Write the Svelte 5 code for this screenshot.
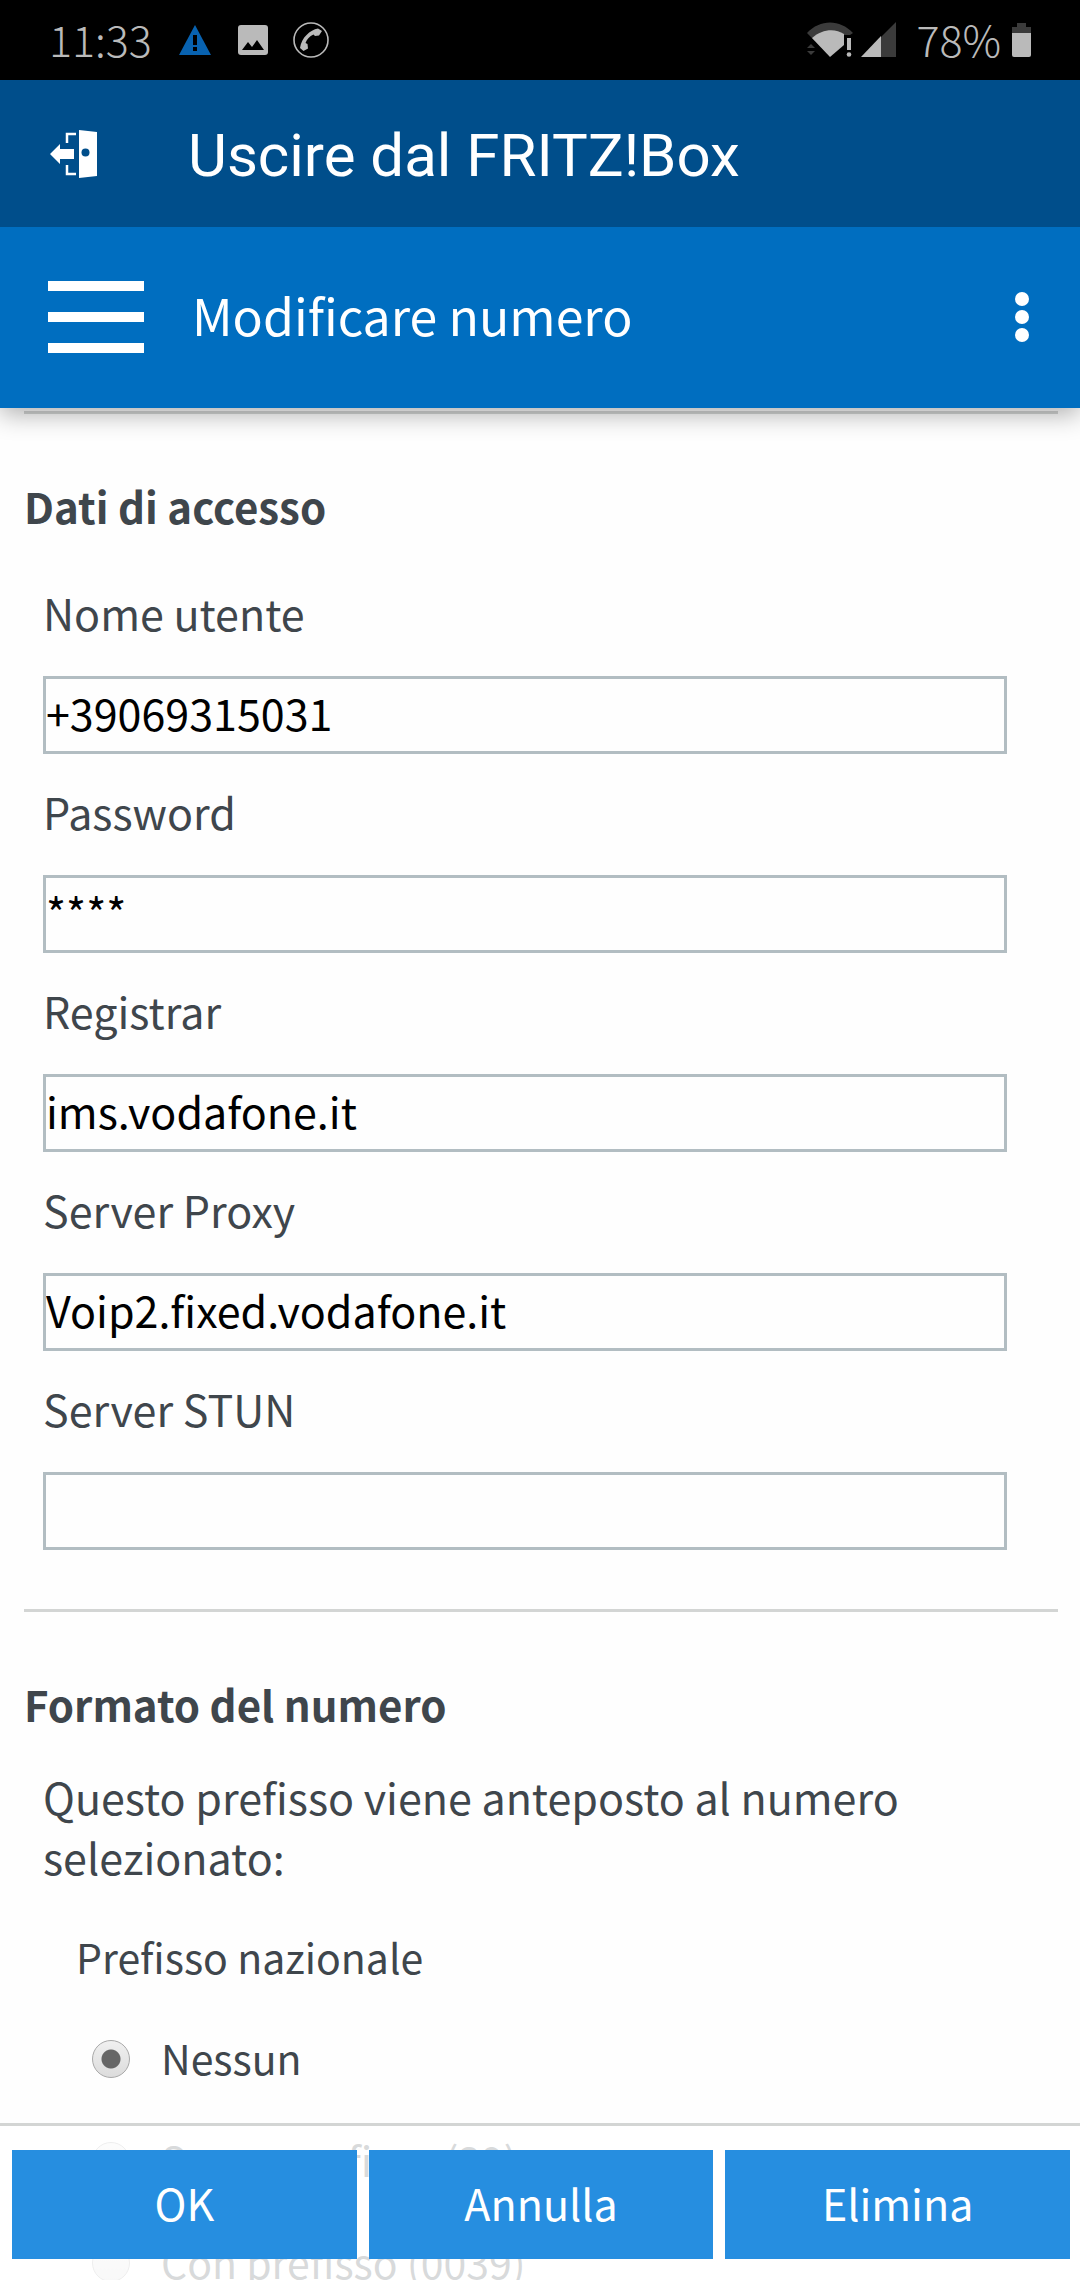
<script lang="ts">
  const fields = [
    { id: 'username', label: 'Nome utente', value: '+39069315031' },
    { id: 'password', label: 'Password', value: '****' },
    { id: 'registrar', label: 'Registrar', value: 'ims.vodafone.it' },
    { id: 'proxy', label: 'Server Proxy', value: 'Voip2.fixed.vodafone.it' },
    { id: 'stun', label: 'Server STUN', value: '' }
  ];

  const prefixes = ['Nessun', 'Senza prefisso (39)', 'Con prefisso (0039)'];
  const actions = ['OK', 'Annulla', 'Elimina'];

  let prefix = $state('Nessun');
</script>

<div class="screen">
  <header class="top">
    <div class="status">
      <span class="clock">11:33</span>
      <svg class="warn" width="32" height="30" viewBox="0 0 32 30" aria-hidden="true">
        <path d="M16 0 32 30H0z" fill="#0862b0" />
        <path d="M14 10h4v10h-4zM14 22h4v4h-4z" fill="#000" />
      </svg>
      <svg class="photo" width="30" height="30" viewBox="0 0 30 30" aria-hidden="true">
        <rect width="30" height="30" rx="3" fill="#bababa" />
        <path d="M4 25 10 17l4 5 5-7 7 10z" fill="#000" />
      </svg>
      <svg class="call" width="36" height="36" viewBox="0 0 36 36" aria-hidden="true">
        <circle cx="18" cy="18" r="17" fill="none" stroke="#bababa" stroke-width="1.6" />
        <path
          d="M25 6.5c-8 1.5-16.5 9-18 19.5l3.5 3 4.5-2.500-.5-4.500-2-1c1.500-4 4-6.500 8-8.500l1.500 1.500 4-.5 3-4.500z"
          fill="#bababa"
        />
      </svg>
      <div class="right">
        <svg width="46" height="36" viewBox="0 0 46 36" aria-hidden="true">
          <path d="M0 11C13-3 33-3 46 11l-3 2h-6L23 34 5 16z" fill="#3b3b3b" />
          <path d="M5 16C15 7 28 6 37 12v11L23 35z" fill="#bababa" />
          <path d="M37 13h9v23h-9z" fill="#000" />
          <path d="M40 16h4v12h-4z" fill="#bababa" />
          <circle cx="42" cy="32.5" r="2.3" fill="#bababa" />
          <path d="M0 26l4-4 4 4zM0 29h8l-4 4z" fill="#3b3b3b" />
        </svg>
        <svg class="signal" width="36" height="36" viewBox="0 0 36 36" aria-hidden="true">
          <path d="M20 15 35 0v35H20z" fill="#3b3b3b" />
          <path d="M0 35 20 14v21z" fill="#bababa" />
        </svg>
        <span class="battery-text">78%</span>
        <svg width="20" height="34" viewBox="0 0 20 34" aria-hidden="true">
          <path d="M5 0h9v4h5v7H0V4h5z" fill="#3b3b3b" />
          <path d="M0 10h19v22a2 2 0 0 1-2 2H2a2 2 0 0 1-2-2z" fill="#bababa" />
        </svg>
      </div>
    </div>

    <div class="app-bar">
      <button aria-label="Esci">
        <svg width="48" height="48" viewBox="0 0 48 48" fill="#fff" aria-hidden="true">
          <path d="M29 0 47 2v44l-18 2z" />
          <circle cx="35.5" cy="22.5" r="4" fill="#004e8b" />
          <path d="M0 24 10 14v5h14v10H10v5z" />
          <path d="M17 13V4h9M17 35v9h9" fill="none" stroke="#fff" stroke-width="2.5" />
        </svg>
      </button>
      <span class="app-title">Uscire dal FRITZ!Box</span>
    </div>

    <div class="page-bar">
      <button class="menu" aria-label="Menu">
        <span></span>
        <span></span>
        <span></span>
      </button>
      <h1>Modificare numero</h1>
      <button aria-label="Altro">
        <svg width="14" height="50" viewBox="0 0 14 50" fill="#fff" aria-hidden="true">
          <circle cx="7" cy="7" r="7" />
          <circle cx="7" cy="25" r="7" />
          <circle cx="7" cy="43" r="7" />
        </svg>
      </button>
    </div>
  </header>

  <main>
    <section>
      <h2>Dati di accesso</h2>
      <div class="fields">
        {#each fields as f (f.id)}
          <label for={f.id}>{f.label}</label>
          <input id={f.id} type="text" value={f.value} />
        {/each}
      </div>
    </section>

    <section>
      <h2>Formato del numero</h2>
      <p>Questo prefisso viene anteposto al numero selezionato:</p>
      <fieldset>
        <legend>Prefisso nazionale</legend>
        {#each prefixes as name (name)}
          <label class="option">
            <input type="radio" name="prefix" value={name} bind:group={prefix} />
            {name}
          </label>
        {/each}
      </fieldset>
    </section>
  </main>

  <footer>
    {#each actions as action (action)}
      <button>{action}</button>
    {/each}
  </footer>
</div>

<style>
  :global(body) {
    background: #fefefe;
  }
  .screen {
    height: 100vh;
    display: flex;
    flex-direction: column;
    overflow: hidden;
    position: relative;
    font-family: 'Noto Sans CJK SC', 'Noto Sans', sans-serif;
    font-size: 43px;
    line-height: 60px;
    color: #3f464c;
  }
  button {
    border: 0;
    padding: 0;
    background: none;
    font: inherit;
    color: #fff;
  }
  svg {
    display: block;
    flex: none;
  }

  .top {
    flex: none;
    position: relative;
    z-index: 1;
    color: #fff;
    box-shadow: 0 6px 24px rgba(0, 0, 0, 0.32);
  }
  .status {
    height: 80px;
    padding: 0 48px 0 49px;
    display: flex;
    align-items: center;
    background: #000;
    color: #bababa;
    font-weight: 300;
  }
  .clock,
  .battery-text {
    padding-bottom: 5px;
  }
  .warn {
    margin-left: 27px;
  }
  .photo {
    margin-left: 27px;
  }
  .call {
    margin-left: 25px;
  }
  .right {
    margin-left: auto;
    display: flex;
    align-items: center;
  }
  .signal {
    margin: 0 19px 0 8px;
  }
  .battery-text {
    margin-right: 11px;
  }
  .app-bar {
    height: 147px;
    padding-left: 50px;
    display: flex;
    align-items: center;
    background: #004e8b;
  }
  .app-title {
    padding-top: 4px;
    margin-left: 90px;
    font-family: Roboto, sans-serif;
    font-size: 60px;
  }
  .page-bar {
    box-sizing: border-box;
    height: 181px;
    padding: 0 51px 2px 48px;
    display: flex;
    align-items: center;
    background: #006ec0;
  }
  .menu {
    width: 96px;
    display: grid;
    gap: 21px;
  }
  .menu span {
    height: 10px;
    background: #fff;
  }
  h1 {
    margin: 0 auto 0 48px;
    padding-bottom: 6px;
    font-size: 50px;
    font-weight: 400;
  }

  main {
    flex: 1;
    min-height: 0;
    overflow: hidden;
    padding: 3px 22px 0 24px;
  }
  section {
    border-top: 3px solid #d3d5d4;
    padding-bottom: 46px;
  }
  h2 {
    margin: 0;
    padding-top: 62px;
    font-size: 42px;
    font-weight: 700;
  }
  .fields {
    padding: 32px 51px 0 19px;
    display: grid;
  }
  .fields label {
    padding: 14px 0 34px;
  }
  .fields input {
    box-sizing: border-box;
    height: 78px;
    margin-bottom: 13px;
    padding: 0 0 7px;
    border: 3px solid #b2bdc2;
    border-radius: 0;
    background: none;
    font: inherit;
    color: #000;
  }
  p {
    margin: 32px 100px 0 19px;
  }
  fieldset {
    margin: 0;
    padding: 0 0 0 52px;
    border: 0;
    font-size: 41px;
  }
  legend {
    padding: 40px 0 20px;
  }
  .option {
    height: 102px;
    padding-left: 16px;
    display: flex;
    align-items: center;
    gap: 31px;
  }
  .option input {
    appearance: none;
    box-sizing: border-box;
    width: 38px;
    height: 38px;
    margin: 4px 0 0;
    border: 1px solid #a8a8a8;
    border-radius: 50%;
    background: linear-gradient(#f0f0f0, #dcdcdc);
  }
  .option input:checked {
    background:
      radial-gradient(circle, #666 9px, transparent 10px),
      linear-gradient(#f0f0f0, #dcdcdc);
  }

  footer {
    position: absolute;
    right: 0;
    bottom: 0;
    left: 0;
    padding: 24px 10px 21px 12px;
    display: grid;
    grid-template-columns: repeat(3, 1fr);
    gap: 12px;
    border-top: 3px solid #d3d5d4;
    background: rgba(255, 255, 255, 0.8);
  }
  footer button {
    height: 109px;
    padding-bottom: 6px;
    background: #268ee0;
  }
</style>
